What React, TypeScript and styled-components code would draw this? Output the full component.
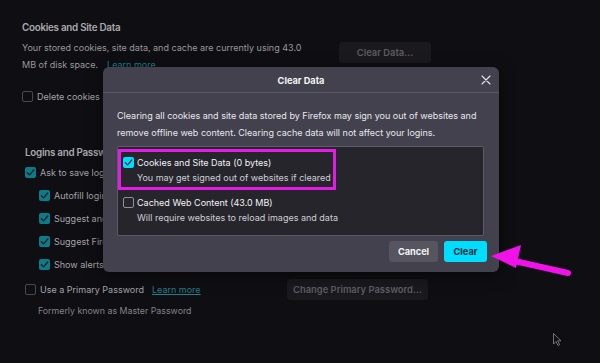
import React from 'react'
import styled, { createGlobalStyle } from 'styled-components'

const GlobalStyle = createGlobalStyle`
  html, body {
    margin: 0;
    padding: 0;
    background: #0f0e12;
  }
  * {
    box-sizing: border-box;
  }
`

const Page = styled.div`
  position: relative;
  width: 600px;
  height: 363px;
  overflow: hidden;
  background: #0f0e12;
  font-family: 'Inter', 'Liberation Sans', sans-serif;
  font-size: 9px;
  padding: 20px 0 0 22px;
  color: #a3a3a7;
`

const Section = styled.section<{ $indent?: number; $top?: number }>`
  margin-left: ${(p) => p.$indent || 0}px;
  margin-top: ${(p) => p.$top || 0}px;
  display: flex;
  flex-direction: column;
`

const SectionTitle = styled.h2`
  margin: 0;
  font-size: 9.8px;
  line-height: 16px;
  font-weight: 600;
  letter-spacing: -0.25px;
  color: #a9a9ad;
`

const InfoRow = styled.div`
  display: flex;
  align-items: flex-start;
  margin-top: 3px;
`

const InfoText = styled.p`
  margin: 0;
  width: 296px;
  font-size: 9px;
  line-height: 17px;
  color: #98989c;
  white-space: nowrap;
`

const Link = styled.span<{ $gap?: number }>`
  color: #217f8c;
  text-decoration: underline;
  margin-left: ${(p) => p.$gap ?? 9}px;
`

const GhostButton = styled.div<{ $width: number }>`
  width: ${(p) => p.$width}px;
  height: 21px;
  border-radius: 4px;
  background: #1a191e;
  color: #5d5d61;
  font-size: 9.4px;
  font-weight: 600;
  white-space: nowrap;
  display: flex;
  align-items: center;
  justify-content: center;
`

const ClearDataWrap = styled.div`
  margin-left: 21px;
  margin-top: 3px;
`

const CheckRow = styled.div<{ $indent?: number; $top?: number }>`
  display: flex;
  align-items: center;
  gap: 4px;
  height: 16px;
  margin-left: ${(p) => p.$indent || 0}px;
  margin-top: ${(p) => p.$top ?? 7}px;
  font-size: 9px;
  color: #a3a3a7;
  white-space: nowrap;
`

const Box = styled.span<{ $checked?: boolean; $tone?: 'dim' | 'bright' }>`
  width: 11px;
  height: 11px;
  flex: none;
  border-radius: 2px;
  display: flex;
  align-items: center;
  justify-content: center;
  border: 1px solid
    ${(p) =>
      p.$checked ? 'transparent' : p.$tone === 'bright' ? '#8f8f9d' : '#4a4a4e'};
  background: ${(p) =>
    p.$checked ? (p.$tone === 'bright' ? '#00ddff' : '#0c7b8a') : 'transparent'};
`

const PasswordRow = styled.div`
  display: flex;
  align-items: center;
  margin-top: 7px;
`

const PasswordLabel = styled(CheckRow)`
  margin-top: 0;
  width: 262px;
`

const SubNote = styled.div`
  margin: 5px 0 0 13px;
  font-size: 8.8px;
  color: #838387;
`

const Dialog = styled.div`
  position: absolute;
  left: 103px;
  top: 67px;
  width: 396px;
  height: 205px;
  background: #42414d;
  border-radius: 6px;
  box-shadow: 0 4px 16px rgba(0, 0, 0, 0.5);
  display: flex;
  flex-direction: column;
  color: #ececf0;
`

const DialogHeader = styled.div`
  position: relative;
  flex: none;
  height: 26px;
  padding-top: 1px;
  border-bottom: 1px solid #5a5966;
  display: flex;
  align-items: center;
  justify-content: center;
  font-size: 9.2px;
  font-weight: 700;
  color: #f4f4f6;
`

const CloseButton = styled.div`
  position: absolute;
  right: 8px;
  top: 8px;
  width: 10px;
  height: 10px;
  display: flex;
`

const DialogBody = styled.div`
  flex: 1;
  padding: 14px 15px 0 14px;
  display: flex;
  flex-direction: column;
`

const Intro = styled.p`
  margin: 0;
  font-size: 9px;
  line-height: 17px;
  color: #e8e8ec;
  white-space: nowrap;
`

const OptionList = styled.div`
  flex: none;
  margin-top: 5px;
  height: 90px;
  background: #26252c;
  border: 1px solid #5b5a66;
  border-radius: 2px;
  padding: 2px 0 0 0;
  display: flex;
  flex-direction: column;
`

const Option = styled.div<{ $highlight?: boolean }>`
  width: ${(p) => (p.$highlight ? '218px' : 'auto')};
  border: 3px solid ${(p) => (p.$highlight ? '#e41be6' : 'transparent')};
  padding: 3px 0 2px 2px;
  margin-bottom: -1px;
  display: flex;
  flex-direction: column;
`

const OptionTitle = styled.div`
  display: flex;
  align-items: center;
  gap: 3px;
  height: 14px;
  font-size: 9px;
  color: #f2f2f5;
  white-space: nowrap;
`

const OptionNote = styled.div`
  margin: 1px 0 0 14px;
  height: 15px;
  line-height: 15px;
  font-size: 9px;
  color: #cfcfd6;
  white-space: nowrap;
`

const Actions = styled.div`
  display: flex;
  justify-content: flex-end;
  gap: 6px;
  padding-top: 5px;
  margin-right: -3px;
`

const ActionButton = styled.div<{ $primary?: boolean }>`
  height: 21px;
  width: ${(p) => (p.$primary ? 43 : 49)}px;
  border-radius: 3px;
  background: ${(p) => (p.$primary ? '#00ddff' : '#55545f')};
  color: ${(p) => (p.$primary ? '#0f2a33' : '#f4f4f6')};
  font-size: 9.2px;
  font-weight: 700;
  display: flex;
  align-items: center;
  justify-content: center;
`

const Overlay = styled.svg`
  position: absolute;
  left: 0;
  top: 0;
  pointer-events: none;
`

const Check = ({ dark }: { dark?: boolean }) => (
  <svg width="9" height="9" viewBox="0 0 10 10">
    <path
      d="M1.5 5.2 L4 7.6 L8.6 2.2"
      fill="none"
      stroke={dark ? '#0a2a30' : '#0b1b1f'}
      strokeWidth="1.4"
      strokeLinecap="round"
      strokeLinejoin="round"
    />
  </svg>
)

const CheckBox = ({
  checked,
  tone,
}: {
  checked?: boolean
  tone?: 'dim' | 'bright'
}) => (
  <Box $checked={checked} $tone={tone}>
    {checked && <Check dark={tone === 'bright'} />}
  </Box>
)

const App = () => {
  return (
    <Page>
      <GlobalStyle />
      <Section>
        <SectionTitle>Cookies and Site Data</SectionTitle>
        <InfoRow>
          <InfoText>
            Your stored cookies, site data, and cache are currently using 43.0
            <br />
            MB of disk space.
            <Link>Learn more</Link>
          </InfoText>
          <ClearDataWrap>
            <GhostButton $width={92}>Clear Data…</GhostButton>
          </ClearDataWrap>
        </InfoRow>
        <CheckRow $top={15}>
          <CheckBox />
          Delete cookies and site data when Firefox is closed
        </CheckRow>
      </Section>

      <Section $indent={3} $top={41}>
        <SectionTitle>Logins and Passwords</SectionTitle>
        <CheckRow $top={3}>
          <CheckBox checked />
          Ask to save logins and passwords for websites
        </CheckRow>
        <CheckRow $indent={14}>
          <CheckBox checked />
          Autofill logins and passwords
        </CheckRow>
        <CheckRow $indent={14}>
          <CheckBox checked />
          Suggest and generate strong passwords
        </CheckRow>
        <CheckRow $indent={14}>
          <CheckBox checked />
          Suggest Firefox Relay email masks
        </CheckRow>
        <CheckRow $indent={14}>
          <CheckBox checked />
          Show alerts about passwords for breached websites
        </CheckRow>
        <PasswordRow>
          <PasswordLabel>
            <CheckBox />
            Use a Primary Password
            <Link $gap={4}>Learn more</Link>
          </PasswordLabel>
          <GhostButton $width={141}>Change Primary Password…</GhostButton>
        </PasswordRow>
        <SubNote>Formerly known as Master Password</SubNote>
      </Section>

      <Dialog>
        <DialogHeader>
          Clear Data
          <CloseButton>
            <svg width="10" height="10" viewBox="0 0 10 10">
              <path
                d="M1 1 L9 9 M9 1 L1 9"
                stroke="#e6e6ea"
                strokeWidth="1.1"
                strokeLinecap="round"
              />
            </svg>
          </CloseButton>
        </DialogHeader>
        <DialogBody>
          <Intro>
            Clearing all cookies and site data stored by Firefox may sign you
            out of websites and
            <br />
            remove offline web content. Clearing cache data will not affect
            your logins.
          </Intro>
          <OptionList>
            <Option $highlight>
              <OptionTitle>
                <CheckBox checked tone="bright" />
                Cookies and Site Data (0 bytes)
              </OptionTitle>
              <OptionNote>You may get signed out of websites if cleared</OptionNote>
            </Option>
            <Option>
              <OptionTitle>
                <CheckBox tone="bright" />
                Cached Web Content (43.0 MB)
              </OptionTitle>
              <OptionNote>Will require websites to reload images and data</OptionNote>
            </Option>
          </OptionList>
          <Actions>
            <ActionButton>Cancel</ActionButton>
            <ActionButton $primary>Clear</ActionButton>
          </Actions>
        </DialogBody>
      </Dialog>

      <Overlay width="600" height="363" viewBox="0 0 600 363">
        <line
          x1="510"
          y1="260"
          x2="568"
          y2="273"
          stroke="#f012e8"
          strokeWidth="6"
          strokeLinecap="round"
        />
        <path d="M491 256 L521 245 L516 268 Z" fill="#f012e8" strokeLinejoin="round" />
        <path
          d="M553.5 333.5 L553.5 344 L556 341.5 L558 345.5 L559.6 344.7 L557.7 340.8 L561 340.8 Z"
          fill="#111114"
          stroke="#8a8a8e"
          strokeWidth="0.8"
        />
      </Overlay>
    </Page>
  )
}

export default App
